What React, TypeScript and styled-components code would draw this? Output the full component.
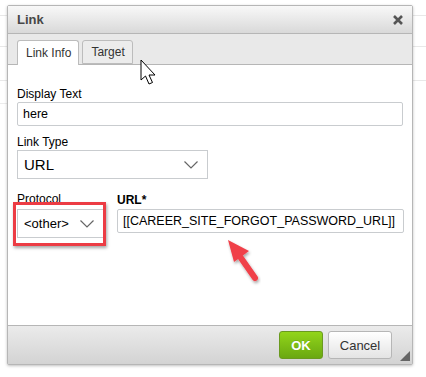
import React from "react";
import styled, { createGlobalStyle } from "styled-components";

const Global = createGlobalStyle`
  html, body { margin: 0; padding: 0; background: #fff; }
  body { font-family: "Liberation Sans", Arial, sans-serif; }
`;

const Page = styled.div`
  position: relative;
  width: 426px;
  height: 377px;
  overflow: hidden;
  padding: 5px 0 0 7px;
  box-sizing: border-box;
  background:
    linear-gradient(#e8e8e8, #e8e8e8) 0 15px / 426px 1px no-repeat,
    linear-gradient(#e8e8e8, #e8e8e8) 0 46px / 426px 1px no-repeat,
    linear-gradient(#e8e8e8, #e8e8e8) 0 80px / 426px 1px no-repeat,
    linear-gradient(#ececec, #ececec) 0 103px / 7px 1px no-repeat,
    #fff;
`;

const Dialog = styled.div`
  width: 406px;
  height: 360px;
  box-sizing: border-box;
  border: 1px solid #b6b6b6;
  border-radius: 2px;
  background: #fff;
  box-shadow: 0 1px 3px rgba(0, 0, 0, 0.25);
  display: flex;
  flex-direction: column;
`;

const TitleBar = styled.div`
  height: 27px;
  flex: none;
  display: flex;
  align-items: center;
  justify-content: space-between;
  padding: 0 8px 0 9px;
  background: linear-gradient(#f8f8f8, #d9d9d9);
  border-bottom: 1px solid #b6b6b6;
`;

const Title = styled.span`
  font-weight: bold;
  font-size: 13px;
  color: #474747;
`;

const Close = styled.span`
  width: 12px;
  height: 12px;
  display: flex;
`;

const TabBar = styled.div`
  height: 30px;
  flex: none;
  display: flex;
  align-items: flex-end;
  gap: 3px;
  padding-left: 9px;
  background: #e9e9e9;
  border-bottom: 1px solid #b6b6b6;
`;

const Tab = styled.div<{ $active?: boolean }>`
  height: ${(p) => (p.$active ? "25px" : "24px")};
  margin-bottom: ${(p) => (p.$active ? "-1px" : "0")};
  box-sizing: border-box;
  padding: 0 7px 0 8px;
  display: flex;
  align-items: center;
  font-size: 12px;
  color: #333;
  border: 1px solid #bcbcbc;
  border-bottom: ${(p) => (p.$active ? "none" : "1px solid #bcbcbc")};
  border-radius: 3px 3px 0 0;
  background: ${(p) => (p.$active ? "#fff" : "#ececec")};
`;

const Body = styled.div`
  flex: 1;
  padding: 22px 9px 0 9px;
  display: flex;
  flex-direction: column;
`;

const Label = styled.label<{ $bold?: boolean }>`
  display: block;
  font-size: 12px;
  line-height: 14px;
  color: #000;
  font-weight: ${(p) => (p.$bold ? "bold" : "normal")};
  margin-bottom: 1px;
`;

const TextInput = styled.div<{ $w: number }>`
  width: ${(p) => p.$w}px;
  height: 24px;
  box-sizing: border-box;
  border: 1px solid #c9cccf;
  border-radius: 2px;
  padding: 0 5px;
  display: flex;
  align-items: center;
  font-size: 12.5px;
  color: #000;
  white-space: nowrap;
  overflow: hidden;
`;

const Select = styled.div<{ $w: number; $h: number; $fs: number }>`
  width: ${(p) => p.$w}px;
  height: ${(p) => p.$h}px;
  box-sizing: border-box;
  border: 1px solid #c9cccf;
  padding: 0 9px 0 6px;
  display: flex;
  align-items: center;
  justify-content: space-between;
  font-size: ${(p) => p.$fs}px;
  color: #000;
`;

const Field = styled.div<{ $mb?: number }>`
  margin-bottom: ${(p) => p.$mb ?? 0}px;
`;

const Row = styled.div`
  display: flex;
  gap: 13px;
  align-items: flex-start;
`;

const ProtoLabel = styled(Label)`
  margin-bottom: 3px;
`;

const UrlLabel = styled(Label)`
  margin-top: 1px;
  margin-bottom: 2px;
`;

const Footer = styled.div`
  height: 38px;
  flex: none;
  border-top: 1px solid #b6b6b6;
  background: linear-gradient(#ebebeb, #d3d3d3);
  display: flex;
  align-items: center;
  justify-content: flex-end;
  padding: 0 20px 0 0;
  gap: 5px;
  position: relative;
`;

const Button = styled.div<{ $primary?: boolean }>`
  height: 28px;
  box-sizing: border-box;
  border-radius: 3px;
  display: flex;
  align-items: center;
  justify-content: center;
  font-size: 13px;
  font-weight: ${(p) => (p.$primary ? "bold" : "normal")};
  width: ${(p) => (p.$primary ? "44px" : "64px")};
  color: ${(p) => (p.$primary ? "#fff" : "#333")};
  background: ${(p) =>
    p.$primary ? "linear-gradient(#92d51a, #6aa811)" : "linear-gradient(#ffffff, #e4e4e4)"};
  border: 1px solid ${(p) => (p.$primary ? "#6a9a1f" : "#b6b6b6")};
  text-shadow: ${(p) => (p.$primary ? "0 -1px 0 rgba(0,0,0,0.1)" : "none")};
`;

const Grip = styled.div`
  position: absolute;
  right: 2px;
  bottom: 3px;
  width: 0;
  height: 0;
  border-left: 10px solid transparent;
  border-bottom: 10px solid #666;
`;

const RedBox = styled.div`
  position: absolute;
  left: 13px;
  top: 202px;
  width: 93px;
  height: 44px;
  box-sizing: border-box;
  border: 3px solid #ec3c44;
  box-shadow: 1px 2px 3px rgba(0, 0, 0, 0.35);
`;

const Overlay = styled.svg`
  position: absolute;
  left: 0;
  top: 0;
  pointer-events: none;
`;

const Chevron = ({ w = 14 }: { w?: number }) => (
  <svg width={w} height={8} viewBox="0 0 14 8">
    <path d="M0.5 0.5 L7 7 L13.5 0.5" fill="none" stroke="#666" strokeWidth="1.2" />
  </svg>
);

export default function App() {
  return (
    <>
      <Global />
      <Page>
        <Dialog>
          <TitleBar>
            <Title>Link</Title>
            <Close>
              <svg width="12" height="12" viewBox="0 0 12 12">
                <path d="M2 2 L10 10 M10 2 L2 10" stroke="#555" strokeWidth="2.6" />
              </svg>
            </Close>
          </TitleBar>
          <TabBar>
            <Tab $active>Link Info</Tab>
            <Tab>Target</Tab>
          </TabBar>
          <Body>
            <Field $mb={9}>
              <Label>Display Text</Label>
              <TextInput $w={386}>here</TextInput>
            </Field>
            <Field $mb={13}>
              <Label>Link Type</Label>
              <Select $w={191} $h={29} $fs={15}>
                URL
                <Chevron />
              </Select>
            </Field>
            <Row>
              <Field>
                <ProtoLabel>Protocol</ProtoLabel>
                <Select $w={87} $h={29} $fs={13}>
                  &lt;other&gt;
                  <Chevron />
                </Select>
              </Field>
              <Field>
                <UrlLabel $bold>URL*</UrlLabel>
                <TextInput $w={287}>[[CAREER_SITE_FORGOT_PASSWORD_URL]]</TextInput>
              </Field>
            </Row>
          </Body>
          <Footer>
            <Button $primary>OK</Button>
            <Button>Cancel</Button>
            <Grip />
          </Footer>
        </Dialog>
        <RedBox />
        <Overlay width="426" height="377" viewBox="0 0 426 377">
          <defs>
            <filter id="sh" x="-20%" y="-20%" width="140%" height="140%">
              <feDropShadow dx="1" dy="2" stdDeviation="1.5" floodColor="#000" floodOpacity="0.35" />
            </filter>
          </defs>
          <g filter="url(#sh)">
            <path d="M241 258 L255 278" stroke="#f0404a" strokeWidth="6" strokeLinecap="round" />
            <path d="M228 240 L249 251 L234 262 Z" fill="#f0404a" />
          </g>
          <path
            d="M141 60 L141 80 L145.5 76 L149 84 L152.5 82.5 L149 75 L155 75 Z"
            fill="#fff"
            stroke="#000"
            strokeWidth="1"
            strokeLinejoin="round"
          />
        </Overlay>
      </Page>
    </>
  );
}
